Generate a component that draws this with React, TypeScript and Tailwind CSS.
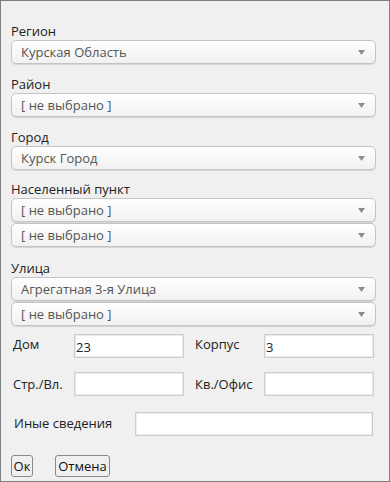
import { ReactNode } from "react";

const font = { fontFamily: '"Open Sans", "Noto Sans", sans-serif' };

function Select({ value }: { value: string }) {
  return (
    <div className="flex h-[24px] w-[365px] items-center justify-between rounded-[5px] border border-[#c4c4c4] bg-gradient-to-b from-white to-[#f1f1f1] pl-[9px] pr-[10px] shadow-[0_1px_1px_rgba(0,0,0,0.12)]">
      <span className="text-[13px] leading-none text-[#555]">{value}</span>
      <svg width="7" height="5" viewBox="0 0 7 5">
        <path d="M0 0h7L3.5 5z" fill="#8c8c8c" />
      </svg>
    </div>
  );
}

function Group({ label, mt, children }: { label: string; mt: string; children: ReactNode }) {
  return (
    <div className={mt}>
      <div className="h-[18px] text-[13px] leading-[18px] text-[#222]">{label}</div>
      <div className="flex flex-col gap-[1px]">{children}</div>
    </div>
  );
}

function Input({ value = "", w }: { value?: string; w: string }) {
  return (
    <div
      className={`flex h-[24px] ${w} items-end border border-[#cdcdcd] bg-white pb-[2px] pl-[1px] text-[13px] leading-[16px] text-[#222] shadow-[inset_0_0_0_1px_#ececec]`}
    >
      {value}
    </div>
  );
}

export default function App() {
  return (
    <div
      className="box-border h-[482px] w-[390px] border border-[#7f7f7f] bg-[#f0f0f0] pl-[10px] pt-[21px]"
      style={font}
    >
      <Group label="Регион" mt="">
        <Select value="Курская Область" />
      </Group>
      <Group label="Район" mt="mt-[11px]">
        <Select value="[ не выбрано ]" />
      </Group>
      <Group label="Город" mt="mt-[11px]">
        <Select value="Курск Город" />
      </Group>
      <Group label="Населенный пункт" mt="mt-[10px]">
        <Select value="[ не выбрано ]" />
        <Select value="[ не выбрано ]" />
      </Group>
      <Group label="Улица" mt="mt-[12px]">
        <Select value="Агрегатная 3-я Улица" />
        <Select value="[ не выбрано ]" />
      </Group>

      <div className="mt-[8px] flex items-start text-[13px] leading-[18px] text-[#222]">
        <span className="w-[63px] pl-[2px] pt-[1px]">Дом</span>
        <Input value="23" w="w-[110px]" />
        <span className="w-[80px] pl-[11px] pt-[1px]">Корпус</span>
        <Input value="3" w="w-[110px]" />
      </div>

      <div className="mt-[14px] flex items-center text-[13px] leading-[18px] text-[#222]">
        <span className="w-[63px] pl-[2px]">Стр./Вл.</span>
        <Input w="w-[110px]" />
        <span className="w-[80px] pl-[11px]">Кв./Офис</span>
        <Input w="w-[110px]" />
      </div>

      <div className="mt-[16px] flex items-center text-[13px] leading-[18px] text-[#222]">
        <span className="w-[124px] pl-[3px] pb-[3px]">Иные сведения</span>
        <Input w="w-[238px]" />
      </div>

      <div className="mt-[19px] flex gap-[22px]">
        <button className="flex h-[22px] w-[22px] items-center justify-center rounded-[3px] border border-[#8a8a8a] bg-[#f0f0f0] text-[13px] leading-none text-[#111]">
          Ок
        </button>
        <button className="flex h-[22px] w-[55px] items-center justify-center rounded-[3px] border border-[#8a8a8a] bg-[#f0f0f0] text-[13px] leading-none text-[#111]">
          Отмена
        </button>
      </div>
    </div>
  );
}
